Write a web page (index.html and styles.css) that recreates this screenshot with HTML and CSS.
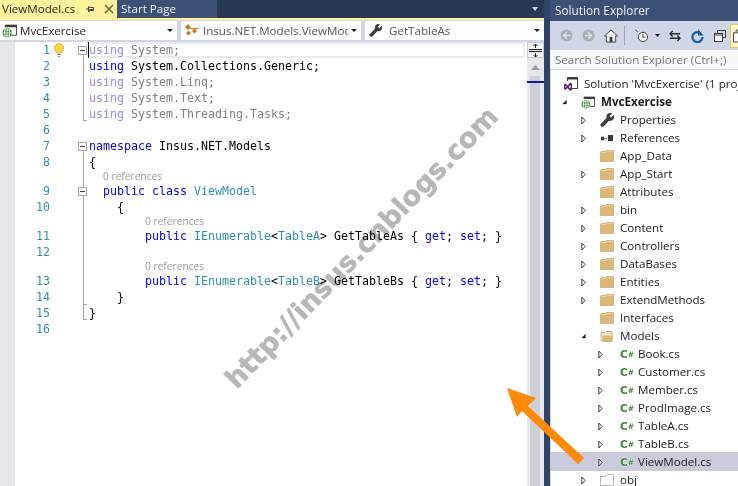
FILE: index.html
```html
<!DOCTYPE html>
<html lang="en">
<head>
<meta charset="utf-8">
<title>ViewModel.cs - Solution Explorer</title>
<link rel="stylesheet" href="styles.css">
</head>
<body>
<svg class="defs" width="0" height="0" aria-hidden="true">
  <symbol id="closed" viewBox="0 0 6 10"><path d="M1 .8 5 5 1 9.2Z" fill="#fff" stroke="#3a3a3a" stroke-width="1.2"/></symbol>
  <symbol id="open" viewBox="0 0 7 7"><path d="M6.5 .5V6.500H.5Z" fill="#1e1e1e"/></symbol>
  <symbol id="folder" viewBox="0 0 14 12"><path d="M0 2.500 1 1H5.500L6.500 0H14V12H0Z" fill="#dcb67a"/><path d="M1 2.500H6L7 1.500H13" fill="none" stroke="#e9cf9f"/></symbol>
  <symbol id="folder-open" viewBox="0 0 15 12"><path d="M1 1.500H5L6 .5H13V11.500H2.500L1 10Z" fill="#f3e6cc" stroke="#c9a86f"/><path d="M3 5H14.500L13 11.500H2Z" fill="#dcb67a"/></symbol>
  <symbol id="dashed" viewBox="0 0 14 12"><path d="M.5 2.500H5.500L7 .5H13.500V11.500H.5Z" fill="#fff" stroke="#777" stroke-dasharray="1 1"/></symbol>
  <symbol id="wrench" viewBox="0 0 14 14"><path d="M9.500 0C11 0 12 .5 12 .5L9.500 3 11 4.500 13.500 2C14.500 4 14 6.500 12 7.500 10.800 8 9.800 8 9 7.700L3.500 13.500C2.500 14.300 .8 13.500 .5 12.500.3 11.800.5 11.200 1 10.700L6.500 5C6 3 7 .2 9.500 0Z" fill="#3c3c3c"/></symbol>
  <symbol id="refs" viewBox="0 0 14 8"><rect x="0" y="2" width="4" height="4" fill="#3c3c3c"/><rect x="5" y="3.500" width="2" height="1" fill="#3c3c3c"/><rect x="8" y="0" width="6" height="7" fill="#3c3c3c"/></symbol>
  <symbol id="project" viewBox="0 0 16 14"><path d="M3.500 3V.5H15.500V11.500H10" fill="none" stroke="#3c3c3c"/><rect x="3.500" y=".5" width="12" height="2.500" fill="#3c3c3c"/><circle cx="5.500" cy="9" r="5" fill="#388a34"/><path d="M.5 9H10.500M5.500 4V14M2.500 6H8.500M2.500 12H8.500M3.500 4.500C2.500 7 2.500 11 3.500 13.500M7.500 4.500C8.500 7 8.500 11 7.500 13.500" fill="none" stroke="#fff" stroke-width=".8"/></symbol>
  <symbol id="solution" viewBox="0 0 14 14"><path d="M3.500 4V.5H13.500V11.500H8" fill="none" stroke="#3c3c3c"/><rect x="3.500" y=".5" width="10" height="2" fill="#3c3c3c"/><path d="M0 7.500 1.500 6.500 3.500 8.500 6.500 5.500 8 6.500V13L6.500 14 3.500 11 1.500 13 0 12ZM1.500 8.500V11L2.700 9.700ZM6.500 8 4.700 9.700 6.500 11.500Z" fill="#68217a"/></symbol>
  <symbol id="circle-left" viewBox="0 0 14 14"><circle cx="7" cy="7" r="6.500" fill="#a9adb5"/><path d="M7.500 3.500 4 7 7.500 10.500M4.500 7H11" fill="none" stroke="#dfe2e8" stroke-width="1.600"/></symbol>
  <symbol id="circle-right" viewBox="0 0 14 14"><circle cx="7" cy="7" r="6.500" fill="#a9adb5"/><path d="M6.500 3.500 10 7 6.500 10.500M9.500 7H3" fill="none" stroke="#dfe2e8" stroke-width="1.600"/></symbol>
</svg>

<div class="app">
  <section class="editor">
    <div class="tabs">
      <div class="tab active">
        <span class="tab-name">ViewModel.cs</span>
        <svg class="pin" width="8" height="8" viewBox="0 0 8 8"><path d="M0 4H2.500M2.500 1.500V6.500H3.500V5.500H7.500V2.500H3.500V1.500M3.500 4.500H7" fill="none" stroke="#444" stroke-width="1"/></svg>
        <svg class="close" width="10" height="10" viewBox="0 0 10 10"><path d="M1 1 9 9M9 1 1 9" stroke="#6d6a4e" stroke-width="1.700"/></svg>
      </div>
      <div class="tab other"><span class="tab-name">Start Page</span></div>
      <div class="tabs-fill"><svg width="6" height="4" viewBox="0 0 6 4"><path d="M0 0H6L3 4Z" fill="#cfd6e5"/></svg></div>
    </div>
    <div class="tab-accent"></div>
    <div class="nav">
      <div class="combo c1">
        <svg width="15" height="14" viewBox="0 0 16 14"><use href="#project"/></svg>
        <span class="combo-text dark">MvcExercise</span>
        <svg class="caret" width="6" height="3" viewBox="0 0 6 3"><path d="M0 0H6L3 3Z" fill="#1e1e1e"/></svg>
      </div>
      <div class="combo c2">
        <svg width="15" height="13" viewBox="0 0 15 13"><path d="M0 3 3 0 6 3 3 6ZM7 7 9.500 4.500 12 7 9.500 9.500ZM1 9 3.500 6.500 6 9 3.500 11.500Z" fill="#c27d1a"/><path d="M5 4H13V5H5Z" fill="#c27d1a"/></svg>
        <span class="combo-text clip">Insus.NET.Models.ViewModel</span>
        <svg class="caret" width="6" height="3" viewBox="0 0 6 3"><path d="M0 0H6L3 3Z" fill="#1e1e1e"/></svg>
      </div>
      <div class="combo c3">
        <svg width="13" height="13" viewBox="0 0 14 14"><use href="#wrench"/></svg>
        <span class="combo-text">GetTableAs</span>
        <svg class="caret" width="6" height="3" viewBox="0 0 6 3"><path d="M0 0H6L3 3Z" fill="#1e1e1e"/></svg>
      </div>
    </div>
    <div class="edit-body">
      <div class="code">
        <div class="ln"><span class="num">1</span><span class="glyph"><svg width="10" height="14" viewBox="0 0 10 14"><path d="M5 .5C2.500 .5 .5 2.500 .5 5 .5 7 2 8 2.500 10H7.500C8 8 9.500 7 9.500 5 9.500 2.500 7.500 .5 5 .5Z" fill="#fbd34e" stroke="#e0b020"/><path d="M3 11.500H7M4 13.500H6" stroke="#8a8a8a"/></svg></span><span class="fold bar-low"><i class="box"></i></span><span class="src current"><b class="faint">using</b> <u class="gray">System;</u></span></div>
        <div class="ln"><span class="num">2</span><span class="glyph"></span><span class="fold bar"></span><span class="src"><b>using</b> System.Collections.Generic;</span></div>
        <div class="ln"><span class="num">3</span><span class="glyph"></span><span class="fold bar"></span><span class="src"><b class="faint">using</b> <u class="gray">System.Linq;</u></span></div>
        <div class="ln"><span class="num">4</span><span class="glyph"></span><span class="fold bar"></span><span class="src"><b class="faint">using</b> <u class="gray">System.Text;</u></span></div>
        <div class="ln"><span class="num">5</span><span class="glyph"></span><span class="fold end"></span><span class="src"><b class="faint">using</b> <u class="gray">System.Threading.Tasks;</u></span></div>
        <div class="ln"><span class="num">6</span><span class="glyph"></span><span class="fold"></span><span class="src"></span></div>
        <div class="ln"><span class="num">7</span><span class="glyph"></span><span class="fold bar-low"><i class="box"></i></span><span class="src"><b>namespace</b> Insus.NET.Models</span></div>
        <div class="ln"><span class="num">8</span><span class="glyph"></span><span class="fold bar"></span><span class="src">{</span></div>
        <div class="ln lens"><span class="num"></span><span class="glyph"></span><span class="fold bar"></span><span class="src"><span class="lens-text in2">0 references</span></span></div>
        <div class="ln"><span class="num">9</span><span class="glyph"></span><span class="fold bar"><i class="box"></i></span><span class="src">  <b>public</b> <b>class</b> <em>ViewModel</em></span></div>
        <div class="ln"><span class="num">10</span><span class="glyph"></span><span class="fold bar"></span><span class="src">    {</span></div>
        <div class="ln lens"><span class="num"></span><span class="glyph"></span><span class="fold bar"></span><span class="src"><span class="lens-text in8">0 references</span></span></div>
        <div class="ln"><span class="num">11</span><span class="glyph"></span><span class="fold bar"></span><span class="src">        <b>public</b> <em>IEnumerable</em>&lt;<em>TableA</em>&gt; GetTableAs { <b>get</b>; <b>set</b>; }</span></div>
        <div class="ln"><span class="num">12</span><span class="glyph"></span><span class="fold bar"></span><span class="src"></span></div>
        <div class="ln lens"><span class="num"></span><span class="glyph"></span><span class="fold bar"></span><span class="src"><span class="lens-text in8">0 references</span></span></div>
        <div class="ln"><span class="num">13</span><span class="glyph"></span><span class="fold bar"></span><span class="src">        <b>public</b> <em>IEnumerable</em>&lt;<em>TableB</em>&gt; GetTableBs { <b>get</b>; <b>set</b>; }</span></div>
        <div class="ln"><span class="num">14</span><span class="glyph"></span><span class="fold bar hook"></span><span class="src">    }</span></div>
        <div class="ln"><span class="num">15</span><span class="glyph"></span><span class="fold end"></span><span class="src">}</span></div>
        <div class="ln"><span class="num">16</span><span class="glyph"></span><span class="fold"></span><span class="src"></span></div>
      </div>
      <div class="vscroll">
        <div class="split"><svg width="13" height="13" viewBox="0 0 13 13"><path d="M0 5.500H13M0 7.500H13M6.500 0V4M6.500 9V13M4.500 2 6.500 0 8.500 2M4.500 11 6.500 13 8.500 11" fill="none" stroke="#222"/></svg></div>
        <div class="up"><svg width="9" height="5" viewBox="0 0 9 5"><path d="M0 5 4.500 0 9 5Z" fill="#9a9ea6"/></svg></div>
        <div class="thumb"><div class="mark"></div></div>
      </div>
    </div>
  </section>

  <aside class="explorer">
    <header class="ex-title">Solution Explorer</header>
    <div class="ex-tools">
      <svg class="ti" width="13" height="13" viewBox="0 0 14 14"><use href="#circle-left"/></svg>
      <svg class="ti" width="13" height="13" viewBox="0 0 14 14"><use href="#circle-right"/></svg>
      <svg class="ti t-home" width="14" height="14" viewBox="0 0 15 14"><path d="M.5 7 7.500 .5 14.500 7H12.500V13.500H2.500V7Z" fill="#f5f5f5" stroke="#3c3c3c"/><rect x="6" y="8" width="3" height="5.500" fill="#3c3c3c"/></svg>
      <span class="tsep"></span>
      <svg class="ti t-clock" width="14" height="14" viewBox="0 0 15 14"><path d="M.5 .5 3 2.500" stroke="#3c3c3c"/><circle cx="8.500" cy="8" r="5" fill="#f5f5f5" stroke="#3c3c3c"/><path d="M8.500 5V8.500H11" fill="none" stroke="#3c3c3c"/></svg>
      <svg class="ti t-caret" width="5" height="3" viewBox="0 0 5 3"><path d="M0 0H5L2.500 3Z" fill="#1e1e1e"/></svg>
      <svg class="ti t-sync" width="12" height="12" viewBox="0 0 13 12"><path d="M4 .5 1 3.500 4 6.500M1.500 3.500H12M9 5.500 12 8.500 9 11.500M11.500 8.500H1" fill="none" stroke="#2a2a2a" stroke-width="1.500"/></svg>
      <svg class="ti t-refresh" width="13" height="14" viewBox="0 0 13 14"><path d="M8.500 3.500A5 5 0 1 0 11.500 8" fill="none" stroke="#0e5ea8" stroke-width="2.200"/><path d="M7 0V6.500H12.500Z" fill="#0e5ea8"/></svg>
      <svg class="ti t-copy" width="12" height="12" viewBox="0 0 12 12"><path d="M3.500 3V.5H11.500V7.500H9" fill="none" stroke="#3c3c3c"/><rect x=".5" y="3.500" width="8" height="8" fill="#f5f5f5" stroke="#3c3c3c"/><path d="M1 5H8" stroke="#3c3c3c"/></svg>
      <span class="t-active"><svg width="12" height="14" viewBox="0 0 12 14"><path d="M3.500 3V.5H11.500V9H9" fill="none" stroke="#3c3c3c"/><rect x=".5" y="3.500" width="8" height="10" fill="#fff" stroke="#3c3c3c"/></svg></span>
    </div>
    <div class="ex-search">Search Solution Explorer (Ctrl+;)</div>
    <ul class="tree">
      <li class="node l0"><span class="exp"></span><svg class="ic" width="14" height="14" viewBox="0 0 14 14"><use href="#solution"/></svg><span>Solution 'MvcExercise' (1 project)</span></li>
      <li class="node l1"><span class="exp"><svg width="6" height="6" viewBox="0 0 7 7"><use href="#open"/></svg></span><svg class="ic" width="14" height="13" viewBox="0 0 16 14"><use href="#project"/></svg><strong>MvcExercise</strong></li>
      <li class="node l2"><span class="exp"><svg width="5" height="9" viewBox="0 0 6 10"><use href="#closed"/></svg></span><svg class="ic" width="14" height="14" viewBox="0 0 14 14"><use href="#wrench"/></svg><span>Properties</span></li>
      <li class="node l2"><span class="exp"><svg width="5" height="9" viewBox="0 0 6 10"><use href="#closed"/></svg></span><svg class="ic" width="14" height="7" viewBox="0 0 14 8"><use href="#refs"/></svg><span>References</span></li>
      <li class="node l2"><span class="exp"></span><svg class="ic" width="14" height="12" viewBox="0 0 14 12"><use href="#folder"/></svg><span>App_Data</span></li>
      <li class="node l2"><span class="exp"><svg width="5" height="9" viewBox="0 0 6 10"><use href="#closed"/></svg></span><svg class="ic" width="14" height="12" viewBox="0 0 14 12"><use href="#folder"/></svg><span>App_Start</span></li>
      <li class="node l2"><span class="exp"></span><svg class="ic" width="14" height="12" viewBox="0 0 14 12"><use href="#folder"/></svg><span>Attributes</span></li>
      <li class="node l2"><span class="exp"><svg width="5" height="9" viewBox="0 0 6 10"><use href="#closed"/></svg></span><svg class="ic" width="14" height="12" viewBox="0 0 14 12"><use href="#folder"/></svg><span>bin</span></li>
      <li class="node l2"><span class="exp"><svg width="5" height="9" viewBox="0 0 6 10"><use href="#closed"/></svg></span><svg class="ic" width="14" height="12" viewBox="0 0 14 12"><use href="#folder"/></svg><span>Content</span></li>
      <li class="node l2"><span class="exp"><svg width="5" height="9" viewBox="0 0 6 10"><use href="#closed"/></svg></span><svg class="ic" width="14" height="12" viewBox="0 0 14 12"><use href="#folder"/></svg><span>Controllers</span></li>
      <li class="node l2"><span class="exp"><svg width="5" height="9" viewBox="0 0 6 10"><use href="#closed"/></svg></span><svg class="ic" width="14" height="12" viewBox="0 0 14 12"><use href="#folder"/></svg><span>DataBases</span></li>
      <li class="node l2"><span class="exp"><svg width="5" height="9" viewBox="0 0 6 10"><use href="#closed"/></svg></span><svg class="ic" width="14" height="12" viewBox="0 0 14 12"><use href="#folder"/></svg><span>Entities</span></li>
      <li class="node l2"><span class="exp"><svg width="5" height="9" viewBox="0 0 6 10"><use href="#closed"/></svg></span><svg class="ic" width="14" height="12" viewBox="0 0 14 12"><use href="#folder"/></svg><span>ExtendMethods</span></li>
      <li class="node l2"><span class="exp"></span><svg class="ic" width="14" height="12" viewBox="0 0 14 12"><use href="#folder"/></svg><span>Interfaces</span></li>
      <li class="node l2"><span class="exp"><svg width="6" height="6" viewBox="0 0 7 7"><use href="#open"/></svg></span><svg class="ic" width="14" height="11" viewBox="0 0 15 12"><use href="#folder-open"/></svg><span>Models</span></li>
      <li class="node l3"><span class="exp"><svg width="5" height="9" viewBox="0 0 6 10"><use href="#closed"/></svg></span><span class="cs">C<sup>#</sup></span><span>Book.cs</span></li>
      <li class="node l3"><span class="exp"><svg width="5" height="9" viewBox="0 0 6 10"><use href="#closed"/></svg></span><span class="cs">C<sup>#</sup></span><span>Customer.cs</span></li>
      <li class="node l3"><span class="exp"><svg width="5" height="9" viewBox="0 0 6 10"><use href="#closed"/></svg></span><span class="cs">C<sup>#</sup></span><span>Member.cs</span></li>
      <li class="node l3"><span class="exp"><svg width="5" height="9" viewBox="0 0 6 10"><use href="#closed"/></svg></span><span class="cs">C<sup>#</sup></span><span>ProdImage.cs</span></li>
      <li class="node l3"><span class="exp"><svg width="5" height="9" viewBox="0 0 6 10"><use href="#closed"/></svg></span><span class="cs">C<sup>#</sup></span><span>TableA.cs</span></li>
      <li class="node l3"><span class="exp"><svg width="5" height="9" viewBox="0 0 6 10"><use href="#closed"/></svg></span><span class="cs">C<sup>#</sup></span><span>TableB.cs</span></li>
      <li class="node l3 selected"><span class="exp"><svg width="5" height="9" viewBox="0 0 6 10"><use href="#closed"/></svg></span><span class="cs on">C<sup>#</sup></span><span>ViewModel.cs</span></li>
      <li class="node l2"><span class="exp"><svg width="5" height="9" viewBox="0 0 6 10"><use href="#closed"/></svg></span><svg class="ic" width="14" height="12" viewBox="0 0 14 12"><use href="#dashed"/></svg><span>obj</span></li>
    </ul>
  </aside>

  <div class="watermark">http://insus.cnblogs.com</div>
  <svg class="pointer" width="90" height="90" viewBox="0 0 90 90"><path d="M3 4 32 14 24 22 80 74 74 80 18 27 13 33Z" fill="#ff8a0a"/></svg>
</div>
</body>
</html>
```
FILE: styles.css
```css
* { box-sizing: border-box; }
html, body { margin: 0; padding: 0; }
body { width: 738px; height: 486px; overflow: hidden; background: #2f4366; font-family: "Open Sans", "Noto Sans", sans-serif; font-size: 12px; color: #1e1e1e; }
.defs { display: block; height: 0; }
.app { position: relative; display: flex; width: 738px; height: 486px; overflow: hidden; background: #2f4366; }

/* editor */
.editor { width: 544px; display: flex; flex-direction: column; flex: none; }
.tabs { display: flex; height: 18px; background: #293955; flex: none; }
.tab { display: flex; align-items: center; font-size: 11.6px; line-height: 18px; }
.tab.active { width: 117px; background: #fff29d; color: #1e1e1e; padding-left: 2px; }
.tab.other { width: 100px; background: #3b5074; color: #eef1f6; padding-left: 4px; }
.pin { margin-left: 11px; }
.close { margin-left: 10px; }
.tabs-fill { flex: 1; display: flex; justify-content: flex-end; align-items: center; padding-right: 6px; }
.tab-accent { height: 2px; background: #fff29d; flex: none; }
.nav { height: 22px; background: #cfd6e5; display: flex; gap: 4px; padding-top: 1px; flex: none; }
.combo { height: 19px; background: #fff; display: flex; align-items: center; font-size: 11.6px; padding-right: 3px; flex: none; }
.combo.c1 { width: 177px; padding-left: 2px; }
.combo.c2 { width: 180px; padding-left: 4px; }
.combo.c3 { width: 179px; padding-left: 4px; }
.combo-text { margin-left: 3px; flex: 1; color: #555; white-space: nowrap; overflow: hidden; }
.combo-text.dark { color: #1e1e1e; }
.combo.c3 .combo-text { margin-left: 7px; }
.caret { flex: none; margin-left: 3px; margin-right: 1px; }

.edit-body { flex: 1; display: flex; min-height: 0; background: #fff; }
.code { flex: 1; min-width: 0; font-family: "DejaVu Sans Mono", "Liberation Mono", monospace; font-size: 11.63px; line-height: 16px; background: linear-gradient(#e6e7e8, #e6e7e8) 0 0 / 15px 100% no-repeat #fff; }
.ln { display: flex; height: 16px; }
.ln.lens { height: 13px; }
.num { width: 50px; flex: none; text-align: right; color: #2b91af; }
.glyph { width: 28px; flex: none; padding-left: 4px; display: flex; align-items: center; }
.fold { width: 10px; flex: none; }
.bar { background: linear-gradient(#a5a5a5, #a5a5a5) 5px 0 / 1px 100% no-repeat; }
.bar-low { background: linear-gradient(#a5a5a5, #a5a5a5) 5px 12px / 1px 4px no-repeat; }
.end { background: linear-gradient(#a5a5a5, #a5a5a5) 5px 0 / 1px 15px no-repeat, linear-gradient(#a5a5a5, #a5a5a5) 5px 14px / 4px 1px no-repeat; }
.hook { background: linear-gradient(#a5a5a5, #a5a5a5) 5px 0 / 1px 100% no-repeat, linear-gradient(#a5a5a5, #a5a5a5) 5px 15px / 4px 1px no-repeat; }
.box { display: block; width: 9px; height: 9px; margin-top: 4px; border: 1px solid #a5a5a5; background: linear-gradient(#444, #444) center / 5px 1px no-repeat #fff; }
.src { flex: 1; padding-left: 1px; white-space: pre; color: #000; overflow: hidden; }
.src b { font-weight: 400; color: #0000ff; }
.src b.faint { color: #8a8aff; }
.src u { text-decoration: none; }
.src u.gray { color: #808080; }
.src em { font-style: normal; color: #2b91af; }
.src.current { margin-right: 2px; box-shadow: inset 0 2px 0 #eaebef, inset 0 -2px 0 #eaebef, inset -2px 0 0 #eaebef; border-left: 1px solid #000; padding-left: 0; }
.lens-text { font-family: "Open Sans", "Noto Sans", sans-serif; font-size: 10.2px; line-height: 13px; color: #9a9a9a; display: block; }
.lens-text.in2 { margin-left: 14px; }
.lens-text.in8 { margin-left: 56px; }

.vscroll { width: 17px; flex: none; background: #e8e8ec; display: flex; flex-direction: column; }
.split { height: 16px; background: #f2f3f6; border: 1px solid #c4c8d2; display: flex; align-items: center; justify-content: center; flex: none; }
.up { height: 18px; display: flex; align-items: center; justify-content: center; padding-right: 1px; flex: none; }
.thumb { flex: 1; margin-left: 3px; width: 10px; background: #ced0d6; }
.mark { height: 2px; width: 17px; margin: 5px 0 0 -3px; background: #0a1aa8; }

/* explorer */
.explorer { margin-left: 6px; width: 188px; flex: none; display: flex; flex-direction: column; background: #fff; box-shadow: inset 1px 0 0 #cfd6e5; overflow: hidden; }
.ex-title { height: 21px; flex: none; background: #3b5074; color: #eef1f6; font-size: 11.8px; line-height: 20px; padding-left: 5px; }
.ex-tools { height: 29px; flex: none; background: #cfd6e5; display: flex; align-items: center; padding-left: 10px; }
.ti { flex: none; margin-right: 9px; }
.ti.t-home { margin-right: 6px; }
.tsep { width: 1px; height: 19px; background: #9da3b0; margin-right: 10px; flex: none; }
.ti.t-clock { margin-right: 6px; }
.ti.t-caret { margin-right: 9px; }
.ti.t-sync { margin-right: 10px; }
.ti.t-refresh { margin-right: 10px; }
.ti.t-copy { margin-right: 4px; }
.t-active { width: 14px; height: 24px; background: #fff6c9; border: 1px solid #e5c365; border-right: 0; display: flex; align-items: center; padding-left: 2px; flex: none; }
.ex-search { height: 20px; flex: none; background: #f7f8fa; border-bottom: 1px solid #cfd6e5; color: #777; padding-left: 5px; line-height: 19px; font-size: 11.6px; white-space: nowrap; }
.tree { list-style: none; margin: 5px 0 0; padding: 0; flex: none; }
.node { display: flex; align-items: center; height: 18px; font-size: 11.6px; line-height: 18px; white-space: nowrap; color: #1a1a1a; }
.node strong { font-weight: 700; }
.exp { width: 5px; flex: none; display: flex; align-items: center; }
.ic { flex: none; }
.l0 { padding-left: 9px; }
.l0 .exp { width: 5px; }
.l0 .ic { margin-right: 6px; }
.l1 { padding-left: 12px; }
.l1 .exp { margin-right: 14px; }
.l1 .ic { margin-right: 6px; }
.l2 { padding-left: 31px; }
.l2 .exp { margin-right: 14px; }
.l2 .ic { margin-right: 6px; }
.l3 { padding-left: 48px; }
.l3 .exp { margin-right: 17px; }
.cs { width: 18px; flex: none; color: #388a34; font: 700 10.500px/18px "DejaVu Sans", sans-serif; }
.cs sup { font-size: 7.500px; vertical-align: 1px; line-height: 0; }
.cs.on { text-shadow: 0 0 2px #fff, 0 0 1px #fff; }
.selected { background: #c9cbdc; height: 19px; margin-top: -1px; padding-top: 1px; }

/* overlays */
.watermark { position: absolute; left: 361px; top: 247px; width: 0; height: 0; display: flex; align-items: center; justify-content: center; transform: rotate(-46deg); font: 700 27.200px "DejaVu Sans", sans-serif; -webkit-text-stroke: .5px #b7b7b7; color: #b7b7b7; white-space: nowrap; mix-blend-mode: multiply; }
.pointer { position: absolute; left: 504px; top: 384px; }
```
